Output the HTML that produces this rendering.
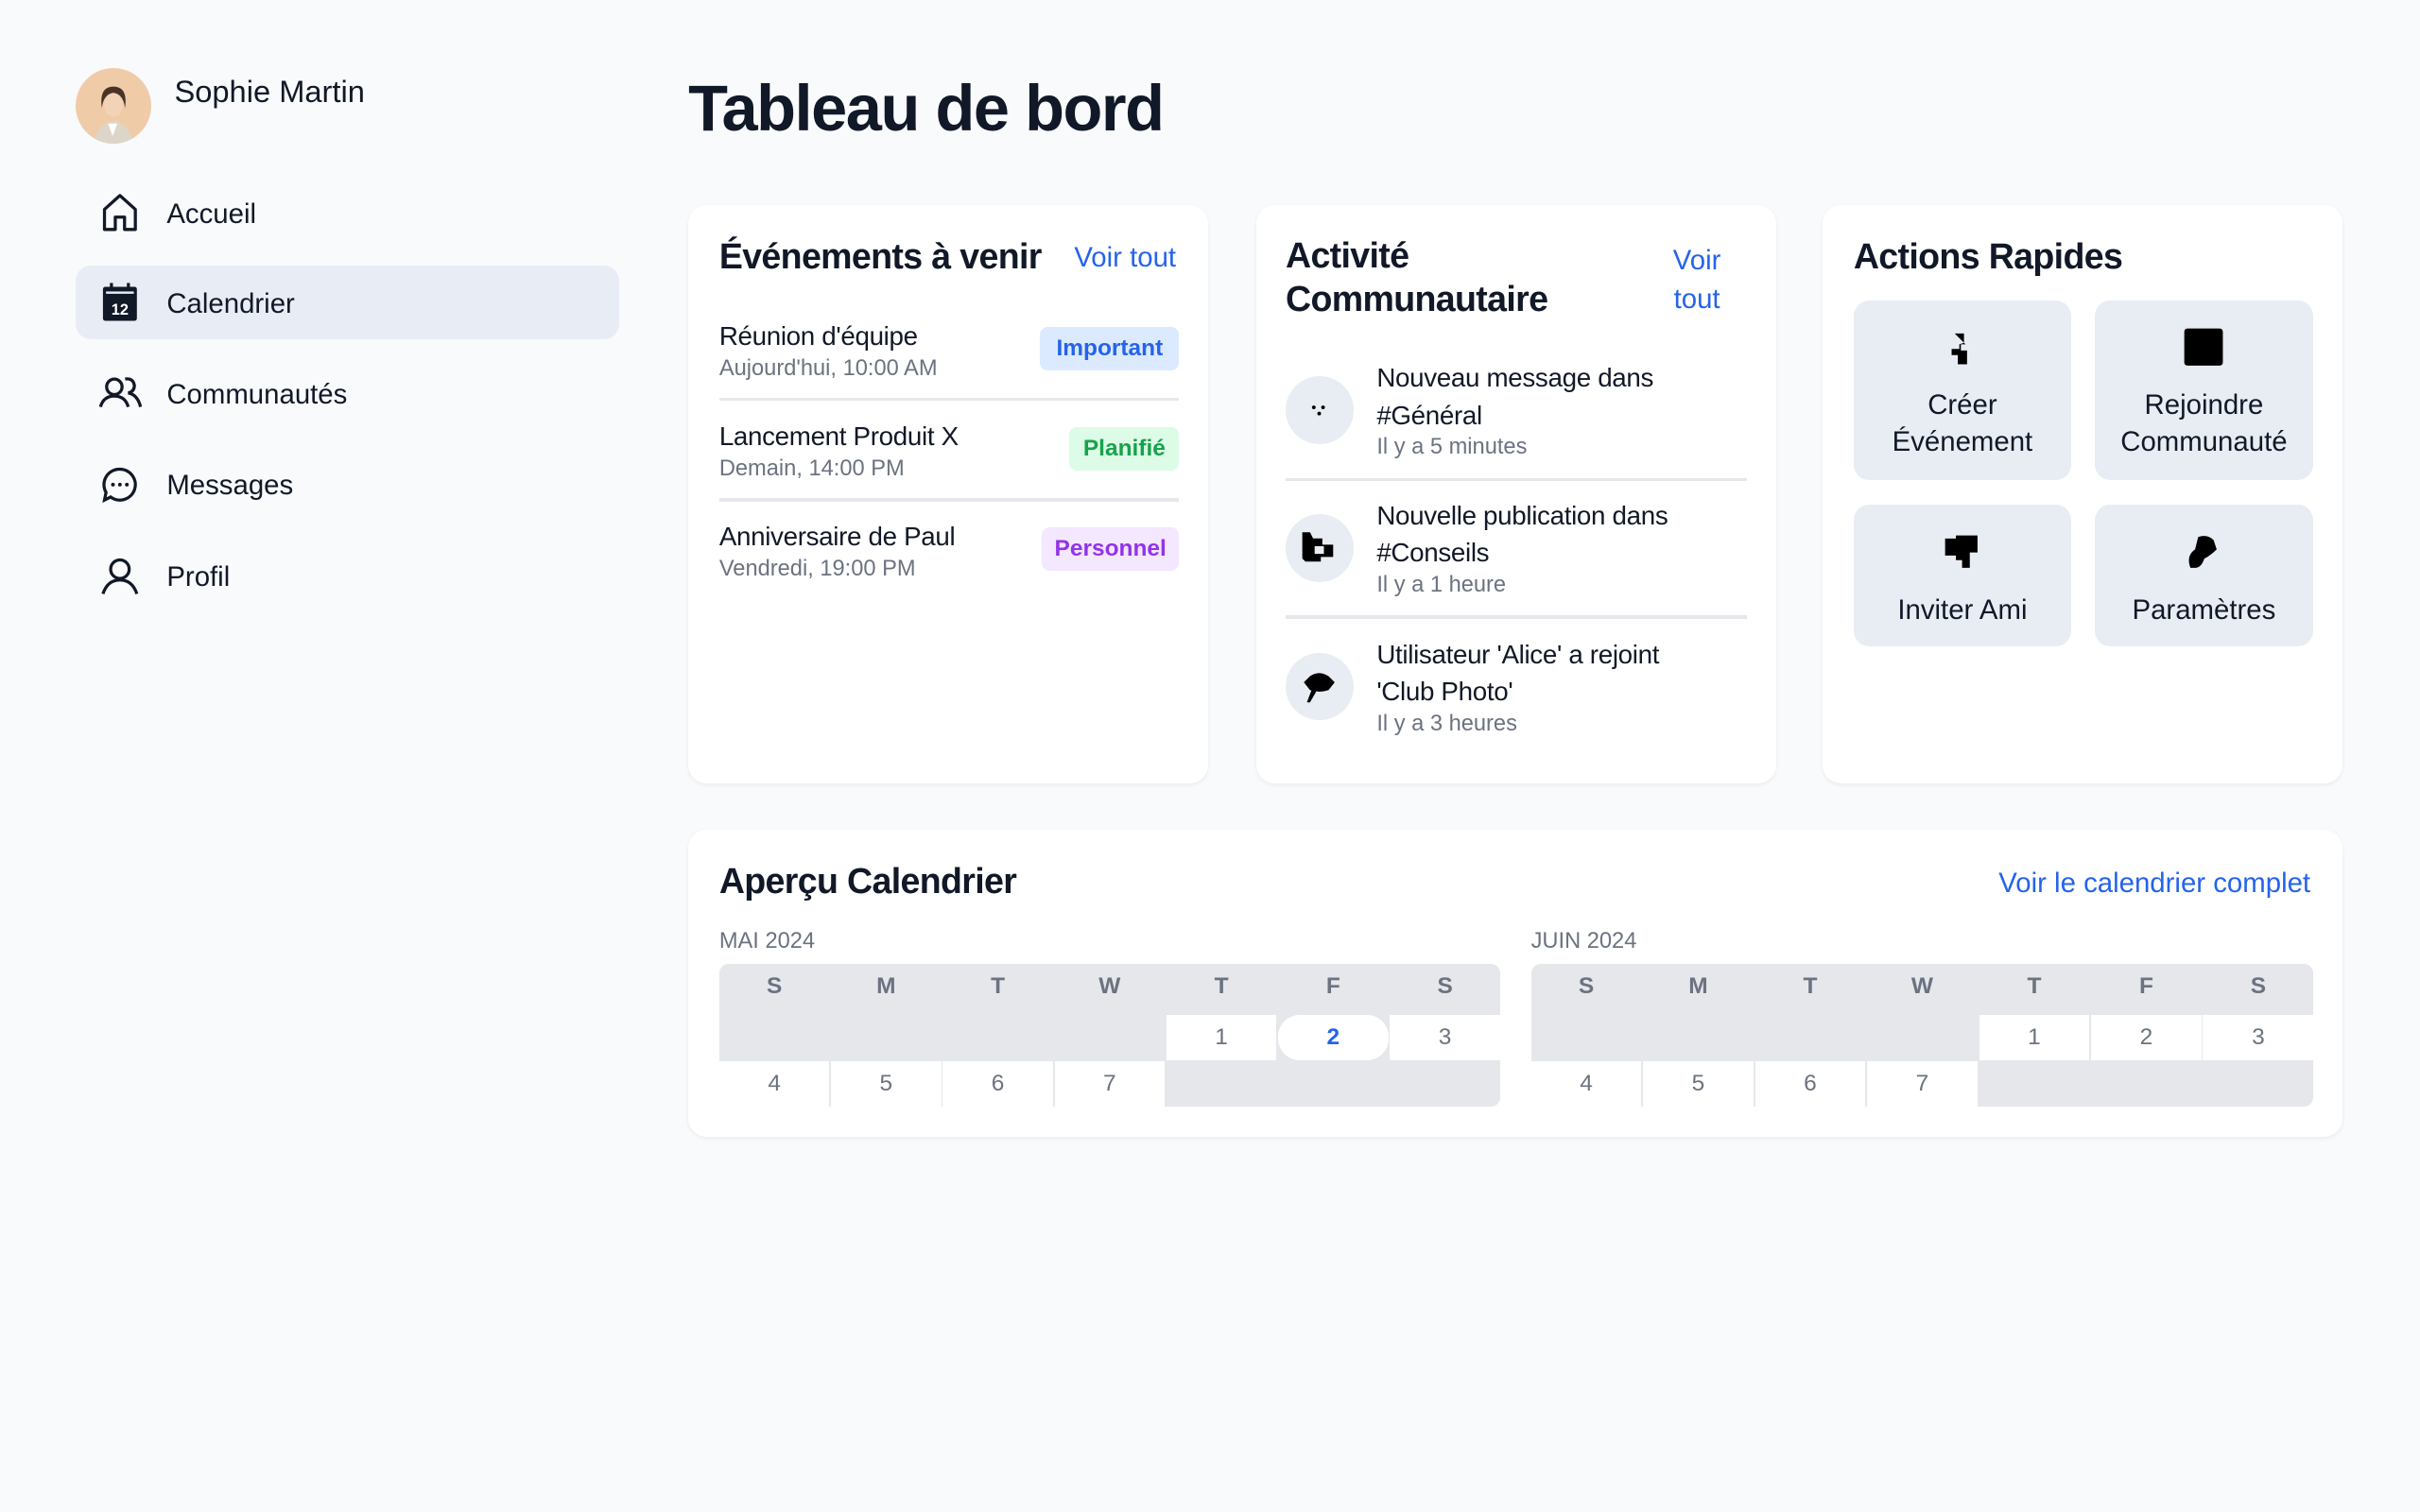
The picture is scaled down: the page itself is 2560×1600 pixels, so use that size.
<!DOCTYPE html>
<html><head><meta charset="utf-8"><style>
html,body{margin:0;padding:0;background:#f8fafc;}
body{width:2560px;height:1600px;overflow:hidden;}
#z{zoom:1.63265;width:1568px;height:980px;position:relative;font-family:"Liberation Sans",sans-serif;color:#111827;}
.a{position:absolute;white-space:nowrap;}
.nav{position:absolute;left:108px;font-size:18px;line-height:22px;}
.ic{position:absolute;left:64px;width:28px;height:28px;}
.card{position:absolute;background:#fff;border-radius:12px;box-shadow:0 1px 3px rgba(0,0,0,.06);}
.h{font-weight:bold;font-size:23px;letter-spacing:-.4px;}
.link{color:#2563eb;font-size:18px;}
.t{font-size:17px;letter-spacing:-.2px;}
.s{font-size:14.5px;color:#6b7280;}
.badge{position:absolute;height:28px;line-height:28px;border-radius:5px;font-size:15px;font-weight:bold;text-align:center;}
.hr{position:absolute;height:2px;background:#e5e7eb;}
.circ{position:absolute;left:833px;width:44px;height:44px;border-radius:50%;background:#e8edf4;}
.tile{position:absolute;background:#e8edf4;border-radius:10px;text-align:center;font-size:18px;line-height:24px;}
.grid{position:absolute;top:625px;height:92px;background:#e5e7eb;border-radius:6px;display:grid;grid-template-columns:repeat(7,1fr);grid-template-rows:32px 29px 30px;column-gap:1px;row-gap:1px;overflow:hidden;}
.grid div{text-align:center;font-size:15px;color:#6b7280;}
.grid .hd{font-weight:bold;line-height:30px;}
.grid .d{background:#fff;line-height:29px;}
.grid .e{background:transparent;}
</style></head><body><div id="z">
<div class="a" style="left:49px;top:44px;width:49px;height:49px;border-radius:50%;background:#f0cba8;overflow:hidden">
<svg width="49" height="49" viewBox="0 0 49 49"><path d="M12 49 Q14 36 24 34 Q35 36 37 49Z" fill="#ddd6c8"/><path d="M21 36 L24 44 L27 36Z" fill="#fff"/><ellipse cx="24.5" cy="24" rx="6" ry="7.5" fill="#f3d3b8"/><path d="M17 26 Q15 12 24.5 12 Q34 12 32 26 Q31 17 24.5 16 Q18 17 17 26Z" fill="#4a3326"/></svg></div>
<div class="a" style="left:113px;top:48px;font-size:20px;">Sophie Martin</div>
<div class="a" style="left:49px;top:172px;width:352px;height:48px;background:#e8edf5;border-radius:10px"></div>
<svg class="ic" style="top:124px" viewBox="0 0 28 28" fill="none" stroke="#111827" stroke-width="2" stroke-linejoin="round"><path d="M4 12 L14 3 L24 12 V25 H17 V17 H11 V25 H4Z"/></svg>
<div class="nav" style="top:128px">Accueil</div>
<svg class="ic" style="top:182px" viewBox="0 0 28 28"><rect x="3" y="4" width="22" height="22" rx="1.5" fill="#111827"/><rect x="5" y="7" width="18" height="1.5" fill="#e8edf5"/><rect x="7.5" y="1.5" width="2" height="5" fill="#111827"/><rect x="18.5" y="1.5" width="2" height="5" fill="#111827"/><text x="14" y="22" font-size="10" font-weight="bold" fill="#fff" text-anchor="middle" font-family="Liberation Sans">12</text></svg>
<div class="nav" style="top:186px">Calendrier</div>
<svg class="ic" style="top:241px;left:63px;width:30px" viewBox="0 0 30 28" fill="none" stroke="#111827" stroke-width="2"><circle cx="11" cy="10" r="5"/><path d="M2 23 Q4 16 11 16 Q18 16 20 23"/><path d="M18 5 Q23 4 24 9 Q24 13 20 14 Q26 15 28 23"/></svg>
<div class="nav" style="top:245px">Communautés</div>
<svg class="ic" style="top:300px" viewBox="0 0 28 28" fill="none" stroke="#111827" stroke-width="2"><path d="M14 4 A10 10 0 1 1 8 22 L4 24 L5 19 A10 10 0 0 1 14 4Z"/><circle cx="9.5" cy="14" r="1.2" fill="#111827" stroke="none"/><circle cx="14" cy="14" r="1.2" fill="#111827" stroke="none"/><circle cx="18.5" cy="14" r="1.2" fill="#111827" stroke="none"/></svg>
<div class="nav" style="top:304px">Messages</div>
<svg class="ic" style="top:359px" viewBox="0 0 28 28" fill="none" stroke="#111827" stroke-width="2"><circle cx="14" cy="10" r="6"/><path d="M3 26 Q6 17 14 17 Q22 17 25 26"/></svg>
<div class="nav" style="top:363px">Profil</div>

<div class="a" style="left:446px;top:46px;font-size:42px;font-weight:bold;letter-spacing:-.9px">Tableau de bord</div>

<div class="card" style="left:446px;top:133px;width:337px;height:375px"></div>
<div class="a h" style="left:466px;top:153px">Événements à venir</div>
<div class="a link" style="left:696px;top:157px">Voir tout</div>
<div class="a t" style="left:466px;top:208px">Réunion d'équipe</div>
<div class="a s" style="left:466px;top:231px">Aujourd'hui, 10:00 AM</div>
<div class="badge" style="left:674px;top:212px;width:90px;background:#dbeafe;color:#2563eb">Important</div>
<div class="hr" style="left:466px;top:258px;width:298px"></div>
<div class="a t" style="left:466px;top:273px">Lancement Produit X</div>
<div class="a s" style="left:466px;top:296px">Demain, 14:00 PM</div>
<div class="badge" style="left:693px;top:277px;width:71px;background:#dcfce7;color:#16a34a">Planifié</div>
<div class="hr" style="left:466px;top:323px;width:298px"></div>
<div class="a t" style="left:466px;top:338px">Anniversaire de Paul</div>
<div class="a s" style="left:466px;top:361px">Vendredi, 19:00 PM</div>
<div class="badge" style="left:675px;top:342px;width:89px;background:#f3e8ff;color:#9333ea">Personnel</div>

<div class="card" style="left:814px;top:133px;width:337px;height:375px"></div>
<div class="a h" style="left:833px;top:152px;line-height:28px">Activité<br>Communautaire</div>
<div class="a link" style="left:1084px;top:157px;line-height:25px;text-align:center">Voir<br>tout</div>
<div class="circ" style="top:244px"></div>
<svg class="a" style="left:845px;top:256px" width="20" height="20"><circle cx="6" cy="8" r="1.2"/><circle cx="12" cy="8" r="1.2"/><circle cx="9.5" cy="12" r="1.2"/></svg>
<div class="a t" style="left:892px;top:233px;line-height:24px">Nouveau message dans<br>#Général</div>
<div class="a s" style="left:892px;top:282px">Il y a 5 minutes</div>
<div class="hr" style="left:833px;top:310px;width:299px"></div>
<div class="circ" style="top:333px"></div>
<svg class="a" style="left:843px;top:343px" width="24" height="24"><path d="M1 2 H6 L8 6 H14 L14 10 H21 V18 H13 V21 H3 L1 19Z"/><rect x="9" y="11" width="6" height="5" fill="#e8edf4"/></svg>
<div class="a t" style="left:892px;top:322px;line-height:24px">Nouvelle publication dans<br>#Conseils</div>
<div class="a s" style="left:892px;top:371px">Il y a 1 heure</div>
<div class="hr" style="left:833px;top:399px;width:299px"></div>
<div class="circ" style="top:423px"></div>
<svg class="a" style="left:843px;top:434px" width="24" height="24"><path d="M6 4 Q12 0 18 4 L22 8 L18 13 Q12 15 6 13 L2 8Z"/><path d="M7 13 L4 21 L6 21 L10 14Z"/></svg>
<div class="a t" style="left:892px;top:412px;line-height:24px">Utilisateur 'Alice' a rejoint<br>'Club Photo'</div>
<div class="a s" style="left:892px;top:461px">Il y a 3 heures</div>

<div class="card" style="left:1181px;top:133px;width:337px;height:375px"></div>
<div class="a h" style="left:1201px;top:153px">Actions Rapides</div>
<div class="tile" style="left:1201px;top:195px;width:141px;height:116px"><svg style="margin-top:18px" width="22" height="24"><path d="M6 3 H12 V9 L9 10 V13 H4 V17 H8 V23 H14 V14 H10 V10 H13 Z"/></svg><div style="margin-top:7px">Créer<br>Événement</div></div>
<div class="tile" style="left:1357px;top:195px;width:142px;height:116px"><svg style="margin-top:17px" width="28" height="26"><rect x="1" y="1" width="25" height="24" rx="2"/></svg><div style="margin-top:6px">Rejoindre<br>Communauté</div></div>
<div class="tile" style="left:1201px;top:327px;width:141px;height:92px"><svg style="margin-top:19px" width="24" height="24"><path d="M1 3 H8 V1 H22 V12 H17 V22 H12 V17 H8 V14 H1Z"/></svg><div style="margin-top:7px">Inviter Ami</div></div>
<div class="tile" style="left:1357px;top:327px;width:142px;height:92px"><svg style="margin-top:19px" width="28" height="24"><path d="M10 2 Q16 0 20 4 L22 10 Q18 14 14 16 Q12 22 8 22 L5 22 Q2 14 8 10Z"/></svg><div style="margin-top:7px">Paramètres</div></div>

<div class="card" style="left:446px;top:538px;width:1072px;height:199px"></div>
<div class="a h" style="left:466px;top:558px">Aperçu Calendrier</div>
<div class="a link" style="left:1295px;top:562px">Voir le calendrier complet</div>
<div class="a s" style="left:466px;top:602px">MAI 2024</div>
<div class="a s" style="left:992px;top:602px">JUIN 2024</div>
<div class="grid" style="left:466px;width:506px">
<div class="hd">S</div><div class="hd">M</div><div class="hd">T</div><div class="hd">W</div><div class="hd">T</div><div class="hd">F</div><div class="hd">S</div>
<div class="e"></div><div class="e"></div><div class="e"></div><div class="e"></div><div class="d">1</div><div class="d" style="border-radius:14px;color:#2563eb;font-weight:bold">2</div><div class="d">3</div>
<div class="d">4</div><div class="d">5</div><div class="d">6</div><div class="d">7</div><div class="e"></div><div class="e"></div><div class="e"></div>
</div>
<div class="grid" style="left:992px;width:507px">
<div class="hd">S</div><div class="hd">M</div><div class="hd">T</div><div class="hd">W</div><div class="hd">T</div><div class="hd">F</div><div class="hd">S</div>
<div class="e"></div><div class="e"></div><div class="e"></div><div class="e"></div><div class="d">1</div><div class="d">2</div><div class="d">3</div>
<div class="d">4</div><div class="d">5</div><div class="d">6</div><div class="d">7</div><div class="e"></div><div class="e"></div><div class="e"></div>
</div>
</div></body></html>
